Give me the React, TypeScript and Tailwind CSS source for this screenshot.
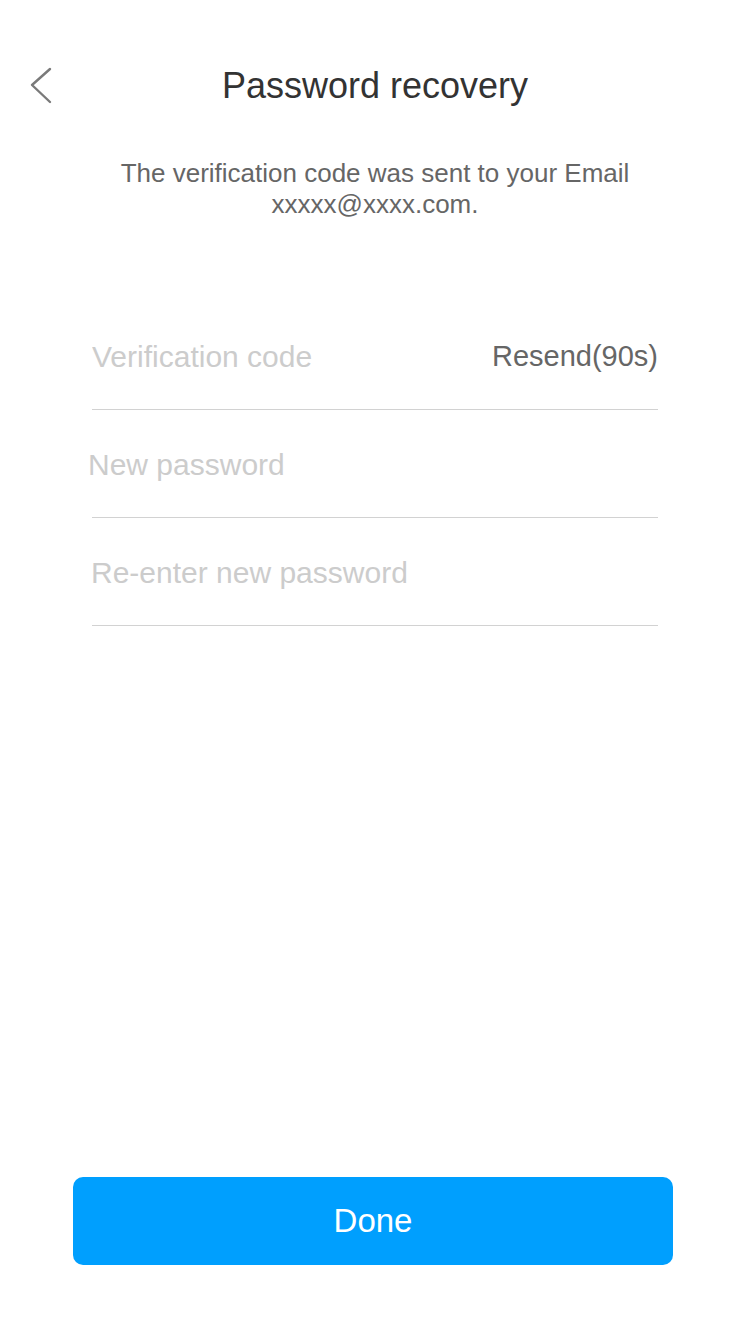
import { useState } from "react"

// One underlined field row of the recovery form
interface FieldRowProps {
    placeholder: string
    type?: string
    shift?: string
    trailing?: React.ReactNode
}

function FieldRow({ placeholder, type = "text", shift = "", trailing }: FieldRowProps) {
    const [value, setValue] = useState("")
    return (
        <div className="flex h-[108px] items-center border-b border-[#d2d2d2] pt-[2px]">
            <input
                type={type}
                value={value}
                onChange={(e) => setValue(e.target.value)}
                placeholder={placeholder}
                className={`min-w-0 flex-1 bg-transparent text-[30px] text-[#333] outline-none placeholder:text-[#cccccc] ${shift}`}
            />
            {trailing}
        </div>
    )
}

export default function App() {
    return (
        <div
            className="flex h-[1334px] w-[750px] flex-col bg-white"
            style={{ fontFamily: '"Liberation Sans", Arial, sans-serif' }}
        >
            {/* Header */}
            <div className="mt-[64px] grid h-[44px] grid-cols-[1fr_auto_1fr] items-center">
                <button className="flex h-[44px] w-[60px] items-center pl-[29px]">
                    <svg width="24" height="38" viewBox="0 0 24 38" fill="none">
                        <path d="M21 2 L3 18 L21 35" stroke="#7a7a7a" strokeWidth="2.4" strokeLinecap="round" strokeLinejoin="round" />
                    </svg>
                </button>
                <h1 className="text-[36px] leading-none text-[#333]">Password recovery</h1>
                <div />
            </div>

            {/* Hint */}
            <p className="mt-[50px] text-center text-[26px] leading-[31px] text-[#666]">
                The verification code was sent to your Email
                <br />
                xxxxx@xxxx.com.
            </p>

            {/* Form */}
            <div className="mx-[92px] mt-[82px]">
                <FieldRow
                    placeholder="Verification code"
                    trailing={<button className="text-[29px] text-[#666]">Resend(90s)</button>}
                />
                <FieldRow placeholder="New password" type="password" shift="-ml-[4px]" />
                <FieldRow placeholder="Re-enter new password" type="password" shift="-ml-[1px]" />
            </div>

            <button className="mb-[69px] ml-[73px] mt-auto h-[88px] w-[600px] rounded-[10px] bg-[#009ffe] text-[33px] text-white">
                Done
            </button>
        </div>
    )
}
